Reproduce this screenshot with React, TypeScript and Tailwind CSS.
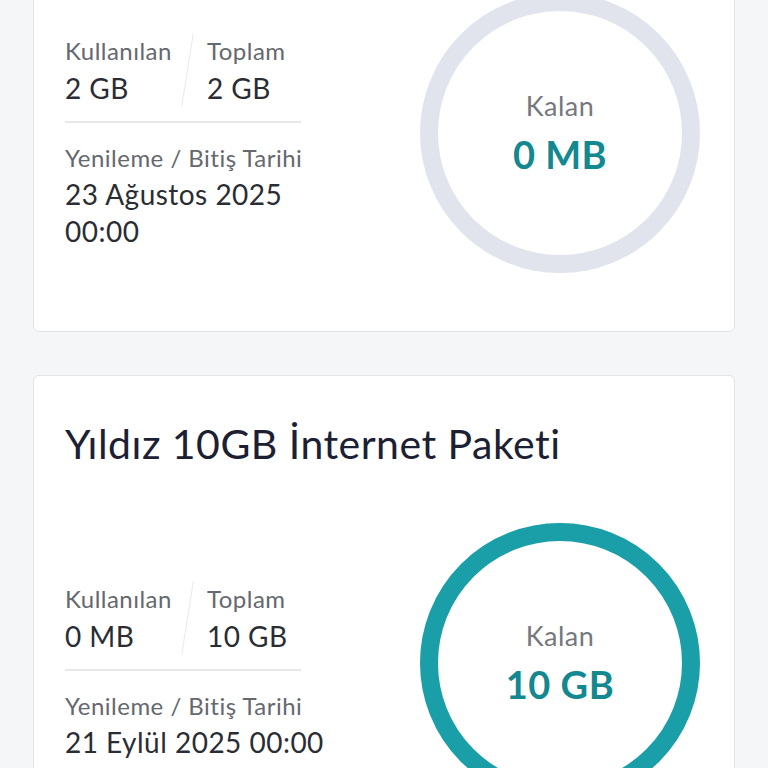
import React from 'react';

interface PackageCardProps {
  title: string;
  used: string;
  total: string;
  renewal: string;
  remaining: string;
  empty?: boolean;
  className?: string;
}

const font = { fontFamily: 'Lato, "Noto Sans", sans-serif' };

const UsageRing: React.FC<{ remaining: string; empty?: boolean }> = ({ remaining, empty }) => (
  <div className="relative w-[280px] h-[280px] shrink-0 mr-[3px]">
    <svg viewBox="0 0 280 280" className="absolute inset-0 w-full h-full">
      <circle cx="140" cy="140" r="131" fill="none" stroke={empty ? '#e1e4ec' : '#1a9fa8'} strokeWidth="18" />
    </svg>
    <div className="relative h-full flex flex-col items-center justify-center">
      <span className="text-[27px] leading-[36px] text-[#75787e] mb-[6px]">Kalan</span>
      <span className="text-[38px] leading-[48px] font-bold text-[#148891]">{remaining}</span>
    </div>
  </div>
);

const PackageCard: React.FC<PackageCardProps> = ({ title, used, total, renewal, remaining, empty, className = '' }) => (
  <div className={`bg-white border border-[#e1e3e7] rounded-md px-[31px] pt-[44px] pb-[58px] tracking-[0.03em] ${className}`}>
    <h2 className="text-[41px] leading-[48px] text-[#1c2033]">{title}</h2>
    <div className="mt-[55px] flex items-center justify-between">
      <div className="w-[290px] pt-4">
        <div className="w-[236px] flex border-b-2 border-[#e6e8eb] pb-[14px]">
          <div className="w-[120px]">
            <div className="text-[24px] leading-[36px] text-[#65686e]">Kullanılan</div>
            <div className="text-[28px] leading-[38px] text-[#2a2d33]">{used}</div>
          </div>
          <div className="w-px h-[74px] bg-[#e6e8eb] rotate-[9deg] ml-[2px] mr-[19px]" />
          <div>
            <div className="text-[24px] leading-[36px] text-[#65686e]">Toplam</div>
            <div className="text-[28px] leading-[38px] text-[#2a2d33]">{total}</div>
          </div>
        </div>
        <div className="pt-[17px] text-[24px] leading-[36px] text-[#65686e]">Yenileme / Bitiş Tarihi</div>
        <div className="text-[28px] leading-[37px] text-[#2a2d33]">{renewal}</div>
      </div>
      <UsageRing remaining={remaining} empty={empty} />
    </div>
  </div>
);

export default function App() {
  return (
    <div className="min-h-screen bg-[#f5f6f8] px-[33px] pb-10 overflow-hidden" style={font}>
      <div className="flex flex-col gap-[43px]">
        <PackageCard
          className="-mt-[155px]"
          title="Yıldız 2GB İnternet Paketi"
          used="2 GB"
          total="2 GB"
          renewal="23 Ağustos 2025 00:00"
          remaining="0 MB"
          empty
        />
        <PackageCard
          title="Yıldız 10GB İnternet Paketi"
          used="0 MB"
          total="10 GB"
          renewal="21 Eylül 2025 00:00"
          remaining="10 GB"
        />
      </div>
    </div>
  );
}
